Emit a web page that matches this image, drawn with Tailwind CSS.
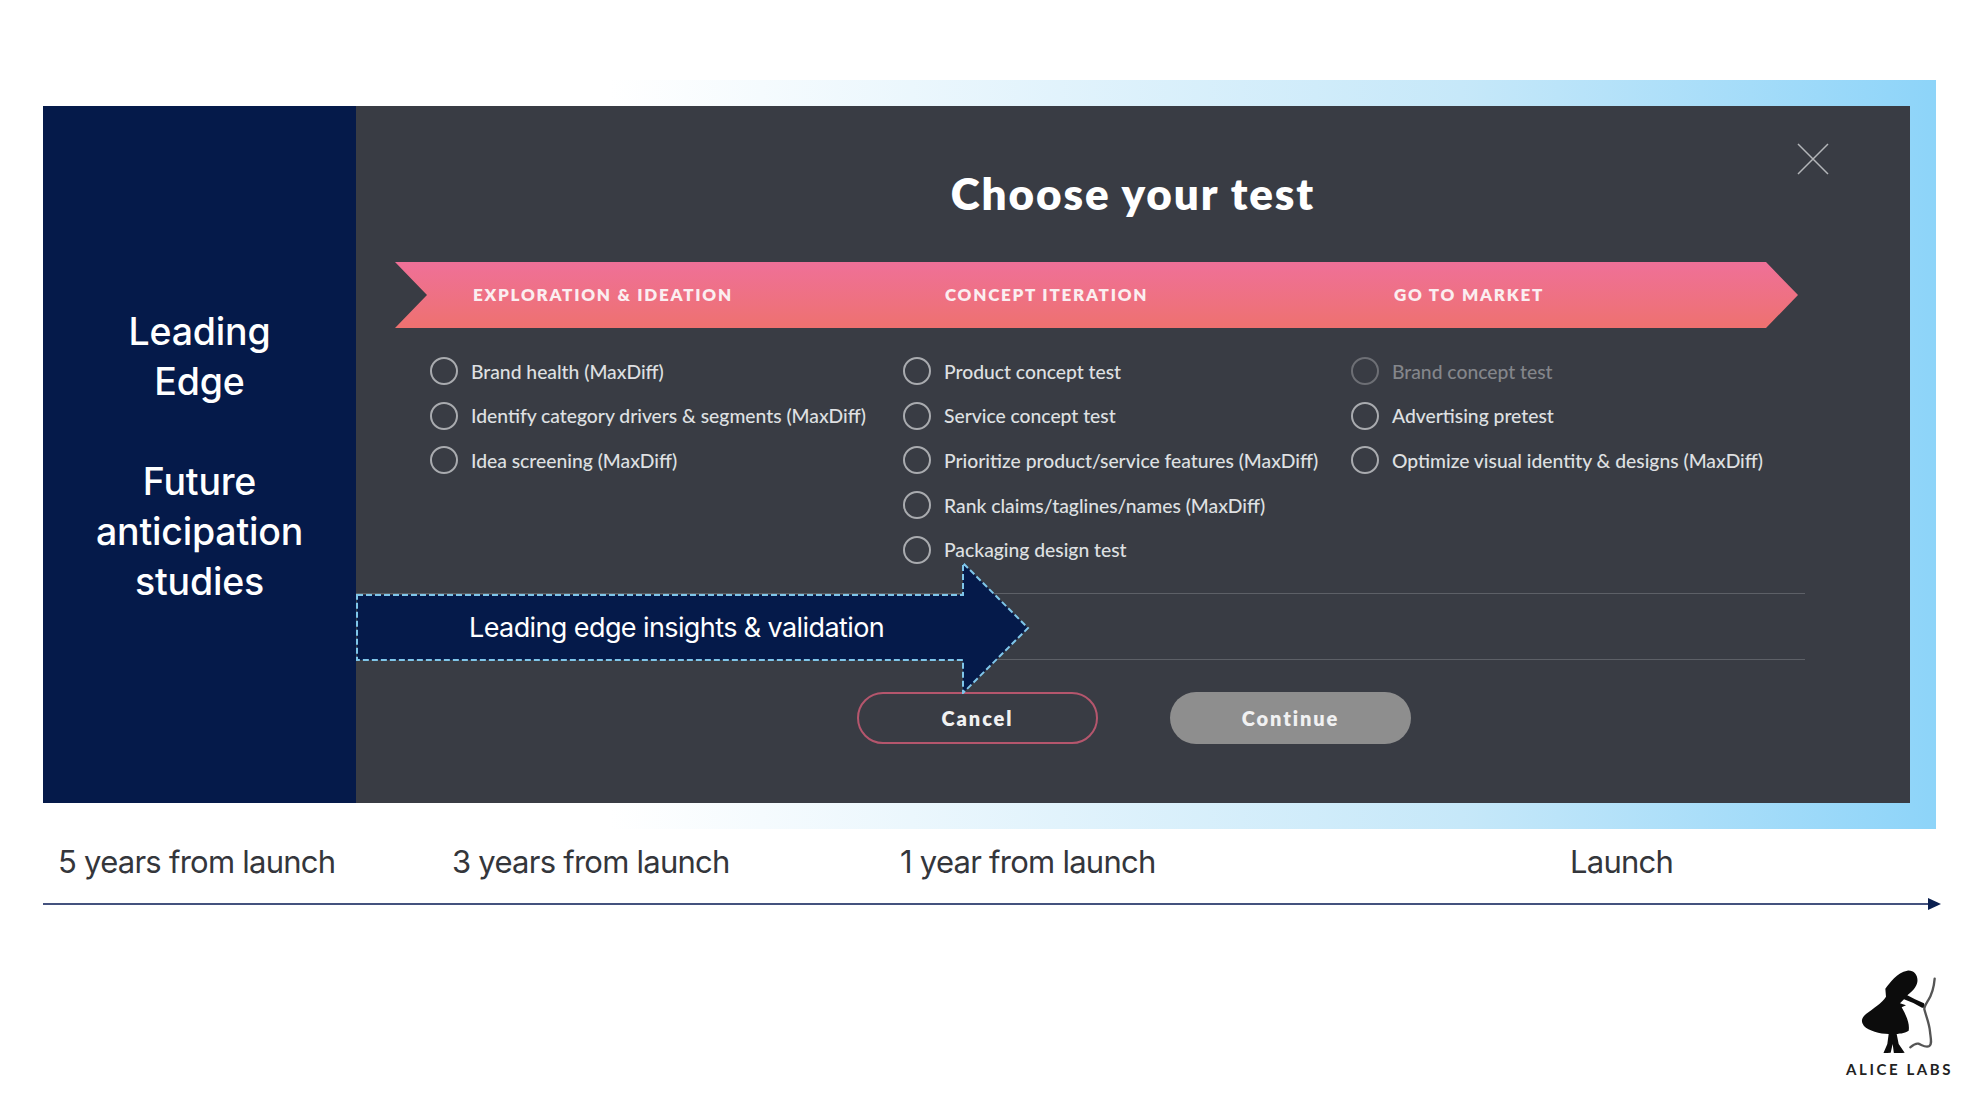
<!DOCTYPE html>
<html lang="en">
<head>
    <meta charset="UTF-8">
    <meta name="viewport" content="width=device-width, initial-scale=1.0">
    <title>Choose your test</title>
    <script src="https://cdn.jsdelivr.net/npm/@tailwindcss/browser@4"></script>
</head>
<body class="bg-white font-['Inter',sans-serif]">
    <div class="w-[1978px] h-[1106px] overflow-hidden pt-[80px]">

        <!-- gradient band with the modal card -->
        <div class="ml-[43px] w-[1893px] h-[749px] pt-[26px] bg-gradient-to-r from-white from-30% via-[#c6e8f9] via-75% to-[#8dd4f9]">
            <div class="flex w-[1867px] h-[697px]">

                <!-- left panel -->
                <div class="w-[313px] pt-[4px] bg-[#051a4a] flex flex-col items-center justify-center text-center text-white text-[37.5px] font-medium tracking-[-0.2px] leading-[50px]">
                    <p class="mb-[50px]">Leading<br>Edge</p>
                    <p>Future<br>anticipation<br>studies</p>
                </div>

                <!-- modal -->
                <div class="relative flex-1 bg-[#393c44] font-['Lato',sans-serif]">
                    <svg class="absolute left-[1441px] top-[37px]" width="32" height="32" viewBox="0 0 32 32" fill="none" stroke="#b4b6b9" stroke-width="1.5">
                        <path d="M1 1 L31 31 M31 1 L1 31"/>
                    </svg>

                    <h1 class="pt-[60px] h-[156px] text-center text-white text-[44px] leading-[54px] font-extrabold tracking-[1.9px]">Choose your test</h1>

                    <!-- ribbon -->
                    <div class="ml-[39px] w-[1403px] h-[66px] pl-[78px] grid grid-cols-[472px_449px_1fr] items-center bg-gradient-to-b from-[#ef7098] to-[#ee716f] [clip-path:polygon(0_0,1371px_0,100%_50%,1371px_100%,0_100%,32px_50%)] text-[#fbeef0] text-[17px] font-extrabold tracking-[1.75px]">
                        <span>EXPLORATION &amp; IDEATION</span>
                        <span>CONCEPT ITERATION</span>
                        <span>GO TO MARKET</span>
                    </div>

                    <!-- options -->
                    <div class="ml-[74px] mt-[21px] grid grid-cols-[473px_448px_1fr] text-[19.3px] font-medium text-[#dfe0e2]">
                        <div>
                            <div class="flex items-center gap-[13px] h-[44.6px]"><span class="w-7 h-7 rounded-full border-2 border-[#a9abaf]"></span><span class="pt-[2px]">Brand health (MaxDiff)</span></div>
                            <div class="flex items-center gap-[13px] h-[44.6px]"><span class="w-7 h-7 rounded-full border-2 border-[#a9abaf]"></span><span class="pt-[2px]">Identify category drivers &amp; segments (MaxDiff)</span></div>
                            <div class="flex items-center gap-[13px] h-[44.6px]"><span class="w-7 h-7 rounded-full border-2 border-[#a9abaf]"></span><span class="pt-[2px]">Idea screening (MaxDiff)</span></div>
                        </div>
                        <div>
                            <div class="flex items-center gap-[13px] h-[44.6px]"><span class="w-7 h-7 rounded-full border-2 border-[#a9abaf]"></span><span class="pt-[2px]">Product concept test</span></div>
                            <div class="flex items-center gap-[13px] h-[44.6px]"><span class="w-7 h-7 rounded-full border-2 border-[#a9abaf]"></span><span class="pt-[2px]">Service concept test</span></div>
                            <div class="flex items-center gap-[13px] h-[44.6px]"><span class="w-7 h-7 rounded-full border-2 border-[#a9abaf]"></span><span class="pt-[2px]">Prioritize product/service features (MaxDiff)</span></div>
                            <div class="flex items-center gap-[13px] h-[44.6px]"><span class="w-7 h-7 rounded-full border-2 border-[#a9abaf]"></span><span class="pt-[2px]">Rank claims/taglines/names (MaxDiff)</span></div>
                            <div class="flex items-center gap-[13px] h-[44.6px]"><span class="w-7 h-7 rounded-full border-2 border-[#a9abaf]"></span><span class="pt-[2px]">Packaging design test</span></div>
                        </div>
                        <div>
                            <div class="flex items-center gap-[13px] h-[44.6px] text-[#84868b]"><span class="w-7 h-7 rounded-full border-2 border-[#6d6f75]"></span><span class="pt-[2px]">Brand concept test</span></div>
                            <div class="flex items-center gap-[13px] h-[44.6px]"><span class="w-7 h-7 rounded-full border-2 border-[#a9abaf]"></span><span class="pt-[2px]">Advertising pretest</span></div>
                            <div class="flex items-center gap-[13px] h-[44.6px]"><span class="w-7 h-7 rounded-full border-2 border-[#a9abaf]"></span><span class="pt-[2px]">Optimize visual identity &amp; designs (MaxDiff)</span></div>
                        </div>
                    </div>

                    <!-- ruled row, arrow lies over it -->
                    <div class="relative mt-[21px] w-[1449px] h-[67px] border-y border-[#5d6067] flex items-center pl-[113px] pt-[2px] font-['Inter',sans-serif]">
                        <svg class="absolute left-0 top-[-32px]" width="674" height="132" viewBox="0 0 674 132" fill="#051a4a" stroke="#7fc6ea" stroke-width="2" stroke-dasharray="6 3">
                            <path d="M1 33 H607 V1 L672 66 L607 131 V98 H1 Z"/>
                        </svg>
                        <span class="relative text-white text-[27px] leading-none tracking-[-0.6px]">Leading edge insights &amp; validation</span>
                    </div>

                    <!-- buttons -->
                    <div class="ml-[501px] mt-[32px] flex gap-[72px] text-[20px] font-extrabold tracking-[1.9px] text-[#f1f1f2]">
                        <button class="w-[241px] h-[52px] rounded-full border-2 border-[#b5566d]">Cancel</button>
                        <button class="w-[241px] h-[52px] rounded-full bg-[#8e8e8e]">Continue</button>
                    </div>
                </div>
            </div>
        </div>

        <!-- timeline -->
        <div class="mt-[13px] pl-[58px] grid grid-cols-[394px_448px_670px_1fr] text-[31px] leading-[40px] tracking-[-0.75px] text-[#34363b]">
            <span>5 years from launch</span>
            <span>3 years from launch</span>
            <span>1 year from launch</span>
            <span>Launch</span>
        </div>
        <div class="ml-[43px] mt-[16px] w-[1898px] flex items-center">
            <div class="flex-1 h-[2px] bg-[#44527e]"></div>
            <div class="w-0 h-0 border-y-[6px] border-y-transparent border-l-[13px] border-l-[#0a1f50]"></div>
        </div>

        <!-- logo -->
        <div class="ml-[1800px] mt-[30px] w-[178px]">
            <svg class="block" width="178" height="113" viewBox="0 0 534 339" fill="#0c0c0c">
                <path d="M322 92 C342 90 355 106 352 126 C349 143 337 153 322 166 L345 178 L372 190 L376 203 L366 203 L340 189 L312 178 L300 190 L318 196 L305 202 C318 225 330 250 326 272 C312 282 295 280 290 282 L296 312 L314 338 L282 342 L278 312 L272 338 L250 340 L262 312 L266 282 C240 282 205 272 192 258 C182 245 184 234 198 222 C220 205 245 190 258 170 L256 146 C270 128 290 98 322 92 Z"/>
                <path d="M404 116 C402 140 395 165 384 182 C378 192 372 200 373 208 C378 228 388 250 390 275 C392 295 397 312 388 318 C378 324 368 316 355 311 C345 309 338 316 331 322" fill="none" stroke="#555555" stroke-width="7" stroke-linecap="round"/>
            </svg>
            <p class="pl-[46px] mt-[9px] text-[15px] leading-none font-['Lato',sans-serif] font-bold tracking-[2.6px] text-[#222] whitespace-nowrap">ALICE LABS</p>
        </div>
    </div>
</body>
</html>
